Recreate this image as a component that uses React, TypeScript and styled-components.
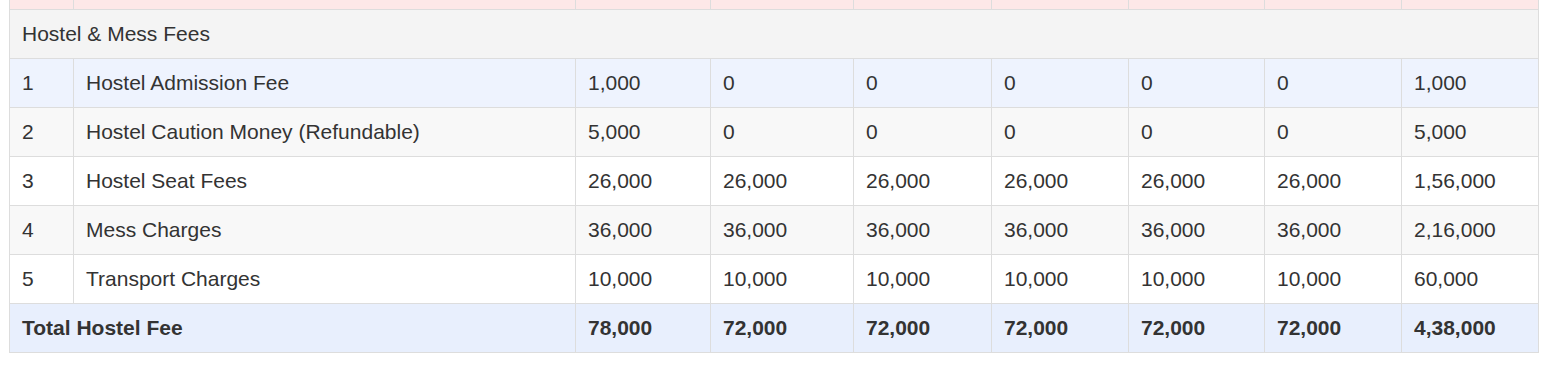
import React from "react";
import styled, { createGlobalStyle } from "styled-components";

const Global = createGlobalStyle`
  html, body { margin: 0; padding: 0; background: #ffffff; }
  body { font-family: "Liberation Sans", Arial, Helvetica, sans-serif; color: #333333; }
`;

const Page = styled.div`
  padding: 0 12px 0 9px;
`;

const Table = styled.table`
  width: 1530px;
  border-collapse: collapse;
  table-layout: fixed;
  font-size: 21px;
  line-height: 24px;
  color: #333333;
`;

const Col = styled.col<{ $w: number }>`
  width: ${(p) => p.$w}px;
`;

type Tone = "pink" | "section" | "highlight" | "striped" | "plain" | "total";

const toneBg: Record<Tone, string> = {
  pink: "#fde8e8",
  section: "#f4f4f4",
  highlight: "#eef3fe",
  striped: "#f8f8f8",
  plain: "#ffffff",
  total: "#e8effd",
};

const Row = styled.tr<{ $tone: Tone }>`
  background: ${(p) => toneBg[p.$tone]};
  font-weight: ${(p) => (p.$tone === "total" ? 700 : 400)};
`;

const Cell = styled.td`
  border: 1px solid #dddddd;
  padding: 12px;
  text-align: left;
  vertical-align: middle;
  white-space: nowrap;
`;

const StubCell = styled.td`
  border: 1px solid #dddddd;
  border-top: none;
  padding: 0;
  height: 9px;
`;

const cols = [64, 502, 135, 143, 138, 137, 136, 137, 137];

type Item = { n: string; name: string; v: string[]; tone: Tone };

const items: Item[] = [
  { n: "1", name: "Hostel Admission Fee", v: ["1,000", "0", "0", "0", "0", "0", "1,000"], tone: "highlight" },
  { n: "2", name: "Hostel Caution Money (Refundable)", v: ["5,000", "0", "0", "0", "0", "0", "5,000"], tone: "striped" },
  { n: "3", name: "Hostel Seat Fees", v: ["26,000", "26,000", "26,000", "26,000", "26,000", "26,000", "1,56,000"], tone: "plain" },
  { n: "4", name: "Mess Charges", v: ["36,000", "36,000", "36,000", "36,000", "36,000", "36,000", "2,16,000"], tone: "striped" },
  { n: "5", name: "Transport Charges", v: ["10,000", "10,000", "10,000", "10,000", "10,000", "10,000", "60,000"], tone: "plain" },
];

const totals = ["78,000", "72,000", "72,000", "72,000", "72,000", "72,000", "4,38,000"];

export default function App() {
  return (
    <>
      <Global />
      <Page>
        <Table>
          <colgroup>
            {cols.map((w, i) => (
              <Col key={i} $w={w} />
            ))}
          </colgroup>
          <tbody>
            <Row $tone="pink">
              {cols.map((_, i) => (
                <StubCell key={i} />
              ))}
            </Row>
            <Row $tone="section">
              <Cell colSpan={9}>Hostel &amp; Mess Fees</Cell>
            </Row>
            {items.map((it) => (
              <Row key={it.n} $tone={it.tone}>
                <Cell>{it.n}</Cell>
                <Cell>{it.name}</Cell>
                {it.v.map((v, i) => (
                  <Cell key={i}>{v}</Cell>
                ))}
              </Row>
            ))}
            <Row $tone="total">
              <Cell colSpan={2}>Total Hostel Fee</Cell>
              {totals.map((v, i) => (
                <Cell key={i}>{v}</Cell>
              ))}
            </Row>
          </tbody>
        </Table>
      </Page>
    </>
  );
}
